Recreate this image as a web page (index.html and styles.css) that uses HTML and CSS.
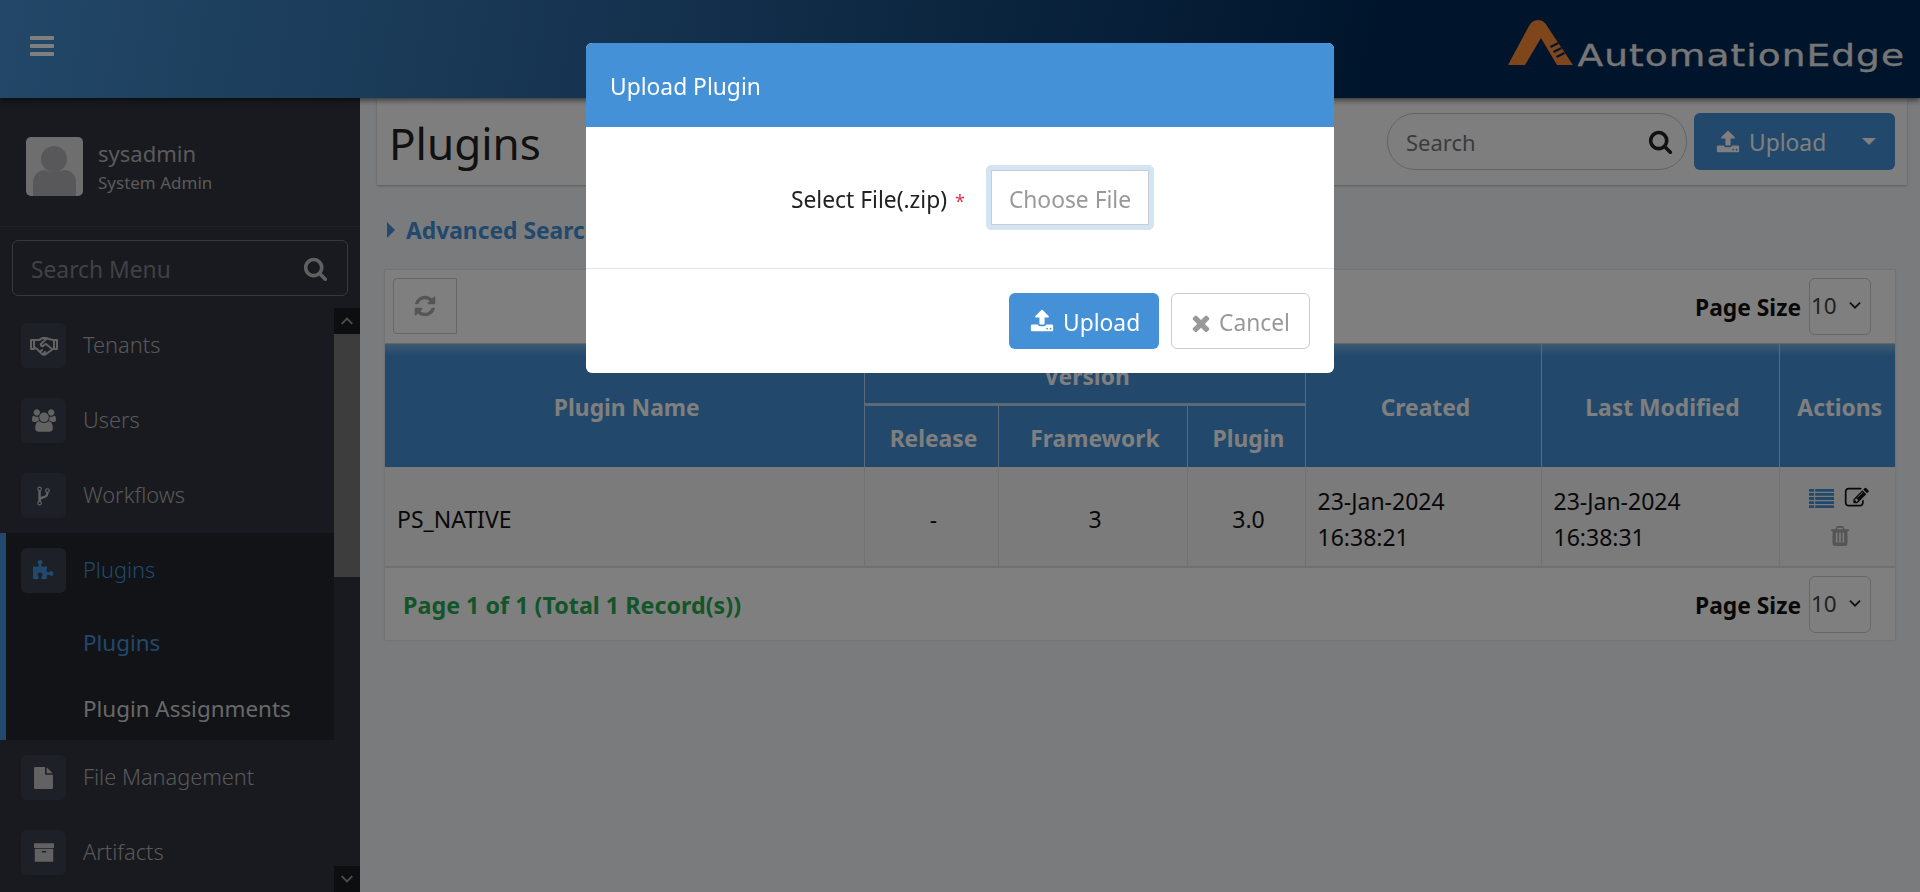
FILE: index.html
```html
<!DOCTYPE html>
<html lang="en">
  <head>
    <meta charset="UTF-8" />
    <title>Plugins</title>
    <link rel="stylesheet" href="styles.css">
  </head>
  <body>
    <svg class="sprite" xmlns="http://www.w3.org/2000/svg">
      <symbol id="i-bars" viewBox="128 256 1536 1280"><path d="M1664 1344v128q0 26-19 45t-45 19h-1408q-26 0-45-19t-19-45v-128q0-26 19-45t45-19h1408q26 0 45 19t19 45zm0-512v128q0 26-19 45t-45 19h-1408q-26 0-45-19t-19-45v-128q0-26 19-45t45-19h1408q26 0 45 19t19 45zm0-512v128q0 26-19 45t-45 19h-1408q-26 0-45-19t-19-45v-128q0-26 19-45t45-19h1408q26 0 45 19t19 45z"/></symbol>
      <symbol id="i-search" viewBox="0 0 1792 1792"><path d="M1216 832q0-185-131.5-316.5t-316.5-131.5-316.5 131.5-131.5 316.5 131.5 316.5 316.5 131.5 316.5-131.5 131.5-316.5zm512 832q0 52-38 90t-90 38q-54 0-90-38l-343-342q-179 124-399 124-143 0-273.5-55.5t-225-150-150-225-55.5-273.5 55.5-273.5 150-225 225-150 273.5-55.5 273.5 55.5 225 150 150 225 55.5 273.5q0 220-124 399l343 343q37 37 37 90z"/></symbol>
      <symbol id="i-upload" viewBox="0 0 1792 1792"><path d="M1344 1472q0-26-19-45t-45-19-45 19-19 45 19 45 45 19 45-19 19-45zm256 0q0-26-19-45t-45-19-45 19-19 45 19 45 45 19 45-19 19-45zm128-224v320q0 40-28 68t-68 28h-1472q-40 0-68-28t-28-68v-320q0-40 28-68t68-28h427q21 56 70.5 92t110.5 36h256q61 0 110.5-36t70.5-92h427q40 0 68 28t28 68zm-325-648q-17 40-59 40h-256v448q0 26-19 45t-45 19h-256q-26 0-45-19t-19-45v-448h-256q-42 0-59-40-17-39 14-69l448-448q18-19 45-19t45 19l448 448q31 30 14 69z"/></symbol>
      <symbol id="i-refresh" viewBox="0 0 1792 1792"><path d="M1639 1056q0 5-1 7-64 268-268 434.5t-478 166.5q-146 0-282.5-55t-243.5-157l-129 129q-19 19-45 19t-45-19-19-45v-448q0-26 19-45t45-19h448q26 0 45 19t19 45-19 45l-137 137q71 66 161 102t187 36q134 0 250-65t186-179q11-17 53-117 8-23 30-23h192q13 0 22.5 9.5t9.5 22.5zm25-800v448q0 26-19 45t-45 19h-448q-26 0-45-19t-19-45 19-45l138-138q-148-137-349-137-134 0-250 65t-186 179q-11 17-53 117-8 23-30 23h-199q-13 0-22.5-9.5t-9.5-22.5v-7q65-268 270-434.5t480-166.5q146 0 284 55.5t245 156.5l130-129q19-19 45-19t45 19 19 45z"/></symbol>
      <symbol id="i-times" viewBox="256 256 1280 1280"><path d="M1490 1322q0 40-28 68l-136 136q-28 28-68 28t-68-28l-294-294-294 294q-28 28-68 28t-68-28l-136-136q-28-28-28-68t28-68l294-294-294-294q-28-28-28-68t28-68l136-136q28-28 68-28t68 28l294 294 294-294q28-28 68-28t68 28l136 136q28 28 28 68t-28 68l-294 294 294 294q28 28 28 68z"/></symbol>
      <symbol id="i-users" viewBox="0 0 1920 1792"><path d="M593 896q-162 5-265 128h-134q-82 0-138-40.5t-56-118.5q0-353 124-353 6 0 43.5 21t97.5 42.5 119 21.5q67 0 133-23-5 37-5 66 0 139 81 256zm1071 637q0 120-73 189.5t-194 69.5h-874q-121 0-194-69.5t-73-189.5q0-53 3.5-103.5t14-109 26.5-108.5 43-97.5 62-81 85.5-53.5 111.5-20q10 0 43 21.5t73 48 107 48 135 21.5 135-21.5 107-48 73-48 43-21.5q61 0 111.5 20t85.5 53.5 62 81 43 97.5 26.5 108.5 14 109 3.5 103.5zm-1024-1277q0 106-75 181t-181 75-181-75-75-181 75-181 181-75 181 75 75 181zm704 384q0 159-112.5 271.5t-271.5 112.5-271.5-112.5-112.5-271.5 112.5-271.5 271.5-112.5 271.5 112.5 112.5 271.5zm576 225q0 78-56 118.5t-138 40.5h-134q-103-123-265-128 81-117 81-256 0-29-5-66 66 23 133 23 59 0 119-21.5t97.5-42.5 43.5-21q124 0 124 353zm-128-609q0 106-75 181t-181 75-181-75-75-181 75-181 181-75 181 75 75 181z"/></symbol>
      <symbol id="i-fork" viewBox="0 0 1024 1792"><path d="M288 1472q0-40-28-68t-68-28-68 28-28 68 28 68 68 28 68-28 28-68zm0-1152q0-40-28-68t-68-28-68 28-28 68 28 68 68 28 68-28 28-68zm640 128q0-40-28-68t-68-28-68 28-28 68 28 68 68 28 68-28 28-68zm96 0q0 52-26 96.5t-70 69.5q-2 287-226 414-67 38-203 81-128 40-169.5 71t-41.5 100v26q44 25 70 69.5t26 96.5q0 80-56 136t-136 56-136-56-56-136q0-52 26-96.5t70-69.5v-820q-44-25-70-69.5t-26-96.5q0-80 56-136t136-56 136 56 56 136q0 52-26 96.5t-70 69.5v497q54-26 154-57 55-17 87.5-29.5t70.5-31 59-39.5 40.5-51 28-69.5 8.5-91.5q-44-25-70-69.5t-26-96.5q0-80 56-136t136-56 136 56 56 136z"/></symbol>
      <symbol id="i-puzzle" viewBox="0 0 1792 1792"><path d="M1664 1098q0 81-44.5 135t-123.5 54q-41 0-77.5-17.5t-59-38-56.5-38-71-17.5q-110 0-110 124 0 39 16 115t15 115v5q-22 0-33 1-34 3-97.5 11.5t-115.5 13.5-98 5q-61 0-103-26.5t-42-83.5q0-37 17.5-71t38-56.5 38-59 17.5-77.5q0-79-54-123.5t-135-44.5q-84 0-143 45.5t-59 127.5q0 43 15 83t33.5 64.5 33.5 53 15 50.5q0 45-46 89-37 35-117 35-95 0-245-24-9-2-27.5-4t-27.5-4l-13-2q-2 0-4-1-2 0-2-1v-1024q2 1 17.5 3.5t34 5 21.5 3.5q150 24 245 24 80 0 117-35 46-44 46-89 0-22-15-50.5t-33.5-53-33.5-64.5-15-83q0-82 59-127.5t144-45.5q80 0 134 44.5t54 123.5q0 41-17.5 77.5t-38 59-38 56.5-17.5 71q0 57 42 83.5t103 26.5q64 0 180-15t163-17v2q-1 2-3.5 17.5t-5 34-3.5 21.5q-24 150-24 245 0 80 35 117 44 46 89 46 22 0 50.5-15t53-33.5 64.5-33.5 83-15q82 0 127.5 59t45.5 143z"/></symbol>
      <symbol id="i-file" viewBox="128 0 1536 1792"><path d="M1152 512v-472q22 14 36 28l408 408q14 14 28 36h-472zm-128 32q0 40 28 68t68 28h544v1056q0 40-28 68t-68 28h-1344q-40 0-68-28t-28-68v-1600q0-40 28-68t68-28h800v544z"/></symbol>
      <symbol id="i-archive" viewBox="64 128 1664 1536"><path d="M1088 832q0-26-19-45t-45-19h-256q-26 0-45 19t-19 45 19 45 45 19h256q26 0 45-19t19-45zm576-192v960q0 26-19 45t-45 19h-1408q-26 0-45-19t-19-45v-960q0-26 19-45t45-19h1408q26 0 45 19t19 45zm64-448v256q0 26-19 45t-45 19h-1536q-26 0-45-19t-19-45v-256q0-26 19-45t45-19h1536q26 0 45 19t19 45z"/></symbol>
      <symbol id="i-edit" viewBox="0 0 1892 1792"><path d="M888 1184l116-116-152-152-116 116v56h96v96h56zm440-720q-16-16-33 1l-350 350q-17 17-1 33t33-1l350-350q17-17 1-33zm80 594v190q0 119-84.5 203.5t-203.5 84.5h-832q-119 0-203.5-84.5t-84.5-203.5v-832q0-119 84.5-203.5t203.5-84.5h832q63 0 117 25 15 7 18 23 3 17-9 29l-49 49q-14 14-32 8-23-6-45-6h-832q-66 0-113 47t-47 113v832q0 66 47 113t113 47h832q66 0 113-47t47-113v-126q0-13 9-22l64-64q15-15 35-7t20 29zm-96-738l288 288-672 672h-288v-288zm444 132l-92 92-288-288 92-92q28-28 68-28t68 28l152 152q28 28 28 68t-28 68z"/></symbol>
      <symbol id="i-trash" viewBox="128 128 1536 1536"><path d="M704 1376v-704q0-14-9-23t-23-9h-64q-14 0-23 9t-9 23v704q0 14 9 23t23 9h64q14 0 23-9t9-23zm256 0v-704q0-14-9-23t-23-9h-64q-14 0-23 9t-9 23v704q0 14 9 23t23 9h64q14 0 23-9t9-23zm256 0v-704q0-14-9-23t-23-9h-64q-14 0-23 9t-9 23v704q0 14 9 23t23 9h64q14 0 23-9t9-23zm-544-992h448l-48-117q-7-9-17-11h-317q-10 2-17 11zm928 32v64q0 14-9 23t-23 9h-96v948q0 83-47 143.5t-113 60.5h-832q-66 0-113-58.5t-47-141.5v-952h-96q-14 0-23-9t-9-23v-64q0-14 9-23t23-9h309l70-167q15-37 54-63t79-26h320q40 0 79 26t54 63l70 167h309q14 0 23 9t9 23z"/></symbol>
      <symbol id="i-list" viewBox="0 0 24 22" preserveAspectRatio="none"><path d="M0 0h5v3.200H0zM6 0h18v3.200H6zM0 4.700h5v3.200H0zM6 4.700h18v3.200H6zM0 9.400h5v3.200H0zM6 9.400h18v3.200H6zM0 14.100h5v3.200H0zM6 14.100h18v3.200H6zM0 18.800h5V22H0zM6 18.800h18V22H6z"/></symbol>
      <symbol id="i-hand" viewBox="0 0 28 20"><path fill="none" stroke="currentColor" stroke-width="2" stroke-linejoin="round" stroke-linecap="round" d="M5 4h4l4-2h3l3 1 4 1h3M1 4h3v9H1zM24 4h3v9h-3zM5 12l2 1 5 5c1 1 3 1 4 0l7-5M16 3l-5 5c-1 2 2 3 3 1l2-1 6 5M10 16l2-2M13 18l2-2"/></symbol>
      <symbol id="i-chev" viewBox="0 0 12 8"><path fill="none" stroke="currentColor" stroke-width="1.600" d="M1.500 1.500 6 6l4.500-4.500"/></symbol>
      <symbol id="i-logo" viewBox="0 0 65 45"><path d="M0 45 21 6C23 2 26 0 30 0s7 2 9 6l26 39H49L33 18 17 45z"/><path fill="#002a58" d="m42 26 8-4 1 2-8 4zm3 5 8-4 1 2-8 4zm3 5 8-4 1 2-8 4z"/></symbol>
    </svg>

    <div class="app">
      <header class="topbar">
        <svg class="ic menu-toggle"><use href="#i-bars" /></svg>
        <div class="logo">
          <svg class="logo-mark"><use href="#i-logo" /></svg>
          <span class="logo-text">AutomationEdge</span>
        </div>
      </header>

      <div class="main">
        <aside class="sidebar">
          <div class="profile">
            <svg class="avatar" viewBox="0 0 57 59">
              <rect width="57" height="59" rx="5" fill="#dcdcdc" />
              <circle cx="28" cy="22" r="13" fill="#b0b0b4" />
              <path d="M7 59V45c0-7 6-12 12-12 3 2 15 2 19 0 7 0 12 5 12 12v14z" fill="#b0b0b4" />
            </svg>
            <div class="profile-text">
              <div class="profile-name">sysadmin</div>
              <div class="profile-role">System Admin</div>
            </div>
          </div>

          <div class="menu-search">
            <span>Search Menu</span>
            <svg class="ic"><use href="#i-search" /></svg>
          </div>

          <div class="menu-wrap">
            <nav class="menu">
              <a class="menu-item"><span class="tile"><svg class="ic ic-hand"><use href="#i-hand" /></svg></span><span class="label">Tenants</span></a>
              <a class="menu-item"><span class="tile"><svg class="ic ic-users"><use href="#i-users" /></svg></span><span class="label">Users</span></a>
              <a class="menu-item"><span class="tile"><svg class="ic ic-fork"><use href="#i-fork" /></svg></span><span class="label">Workflows</span></a>
              <div class="menu-group">
                <a class="menu-item active"><span class="tile"><svg class="ic ic-puzzle"><use href="#i-puzzle" /></svg></span><span class="label">Plugins</span></a>
                <a class="sub-item active">Plugins</a>
                <a class="sub-item">Plugin Assignments</a>
              </div>
              <a class="menu-item"><span class="tile"><svg class="ic ic-file"><use href="#i-file" /></svg></span><span class="label">File Management</span></a>
              <a class="menu-item"><span class="tile"><svg class="ic ic-archive"><use href="#i-archive" /></svg></span><span class="label">Artifacts</span></a>
            </nav>
            <div class="scrollbar">
              <div class="scroll-btn"><svg class="ic up"><use href="#i-chev" /></svg></div>
              <div class="scroll-thumb"></div>
              <div class="scroll-rest"></div>
              <div class="scroll-btn"><svg class="ic"><use href="#i-chev" /></svg></div>
            </div>
          </div>
        </aside>

        <main class="content">
          <div class="title-bar">
            <h1>Plugins</h1>
            <div class="title-tools">
              <div class="search-pill">
                <span>Search</span>
                <svg class="ic"><use href="#i-search" /></svg>
              </div>
              <div class="split-btn">
                <svg class="ic"><use href="#i-upload" /></svg>
                <span>Upload</span>
                <i class="caret"></i>
              </div>
            </div>
          </div>

          <div class="advanced"><i class="caret-right"></i>Advanced Search</div>

          <section class="panel">
            <div class="toolbar">
              <div class="refresh-btn"><svg class="ic"><use href="#i-refresh" /></svg></div>
              <div class="page-size">
                <b>Page Size</b>
                <div class="size-select"><span>10</span><svg class="ic"><use href="#i-chev" /></svg></div>
              </div>
            </div>

            <table class="grid">
              <colgroup>
                <col class="c-name" /><col class="c-release" /><col class="c-framework" /><col class="c-plugin" /><col class="c-date" /><col class="c-modified" /><col />
              </colgroup>
              <thead>
                <tr>
                  <th rowspan="2">Plugin Name</th>
                  <th colspan="3" class="th-version">Version</th>
                  <th rowspan="2">Created</th>
                  <th rowspan="2">Last Modified</th>
                  <th rowspan="2">Actions</th>
                </tr>
                <tr class="sub-head">
                  <th>Release</th>
                  <th>Framework</th>
                  <th>Plugin</th>
                </tr>
              </thead>
              <tbody>
                <tr>
                  <td>PS_NATIVE</td>
                  <td class="mid">-</td>
                  <td class="mid">3</td>
                  <td class="mid">3.0</td>
                  <td>23-Jan-2024<br />16:38:21</td>
                  <td>23-Jan-2024<br />16:38:31</td>
                  <td class="mid">
                    <div class="actions">
                      <svg class="ic ic-list"><use href="#i-list" /></svg>
                      <svg class="ic ic-edit"><use href="#i-edit" /></svg>
                      <svg class="ic ic-trash"><use href="#i-trash" /></svg>
                    </div>
                  </td>
                </tr>
              </tbody>
            </table>

            <div class="panel-foot">
              <b class="records">Page 1 of 1 (Total 1 Record(s))</b>
              <div class="page-size">
                <b>Page Size</b>
                <div class="size-select"><span>10</span><svg class="ic"><use href="#i-chev" /></svg></div>
              </div>
            </div>
          </section>
        </main>
      </div>
    </div>

    <div class="backdrop"></div>

    <div class="modal">
      <div class="modal-head">Upload Plugin</div>
      <div class="modal-body">
        <label>Select File(.zip) <em>*</em></label>
        <span class="file-input">Choose File</span>
      </div>
      <div class="modal-foot">
        <button class="btn btn-primary"><svg class="ic"><use href="#i-upload" /></svg>Upload</button>
        <button class="btn btn-default"><svg class="ic ic-times"><use href="#i-times" /></svg>Cancel</button>
      </div>
    </div>
  </body>
</html>
```

FILE: styles.css
```css
* {
  box-sizing: border-box;
}

html,
body {
  height: 100%;
}

body {
  margin: 0;
  font-family: "Noto Sans", "Open Sans", sans-serif;
  font-size: 22.8px;
  color: #222;
  background-color: #f4f6fa;
  overflow: hidden;
}

.sprite {
  display: none;
}

.ic {
  display: block;
  fill: currentColor;
  flex: none;
}

.app {
  height: 100vh;
  display: flex;
  flex-direction: column;
}

/* top bar */
.topbar {
  height: 98px;
  flex: none;
  display: flex;
  align-items: flex-start;
  justify-content: space-between;
  background: linear-gradient(100deg, #458fd0 0%, #2f6ca6 28%, #002a58 72%, #002a58 100%);
  box-shadow: 0 2px 6px rgba(0, 0, 0, 0.6);
  position: relative;
  z-index: 2;
}

.menu-toggle {
  width: 24px;
  height: 20px;
  margin: 36px 0 0 30px;
  color: #fff;
}

.logo {
  display: flex;
  align-items: flex-end;
  margin: 20px 15px 0 0;
}

.logo-mark {
  width: 65px;
  height: 45px;
  fill: #ff8c38;
  margin-right: 70px;
}

.logo-text {
  font-family: "DejaVu Sans", sans-serif;
  font-size: 30px;
  line-height: 32px;
  letter-spacing: 0.85px;
  color: #ececec;
  margin-bottom: -7px;
  transform: scaleX(1.25);
  transform-origin: right center;
  -webkit-text-stroke: 0.3px #ececec;
}

.main {
  flex: 1;
  display: flex;
  min-height: 0;
}

/* sidebar */
.sidebar {
  width: 360px;
  flex: none;
  display: flex;
  flex-direction: column;
  background-color: #30343e;
  color: #b4b4b4;
  overflow: hidden;
}

.profile {
  height: 129px;
  flex: none;
  display: flex;
  align-items: center;
  gap: 15px;
  padding: 0 26px;
  border-bottom: 1px solid #3e424c;
}

.avatar {
  width: 57px;
  height: 59px;
  flex: none;
  margin-top: 8px;
}

.profile-text {
  padding-top: 12px;
}

.profile-name {
  font-size: 22px;
  line-height: 30px;
}

.profile-role {
  font-size: 17px;
  line-height: 30px;
}

.menu-search {
  height: 56px;
  flex: none;
  margin: 13px 12px 12px;
  padding: 0 19px 0 18px;
  display: flex;
  align-items: center;
  justify-content: space-between;
  border: 1px solid #6c6f76;
  border-radius: 6px;
  color: #80838a;
}

.menu-search span {
  padding-top: 2px;
}

.menu-search .ic {
  width: 25px;
  height: 25px;
  color: #c0c0c0;
}

.menu-wrap {
  flex: 1;
  display: flex;
  min-height: 0;
}

.menu {
  flex: 1;
  min-width: 0;
}

.menu-item {
  height: 75px;
  display: flex;
  align-items: center;
  gap: 17px;
  padding-left: 21px;
  color: #b0b0b0;
}

.label {
  font-size: 21.8px;
  font-weight: 300;
  margin-top: -2px;
}

.tile {
  width: 45px;
  height: 45px;
  flex: none;
  display: flex;
  align-items: center;
  justify-content: center;
  border-radius: 6px;
  background-color: #3a404c;
  color: #c4c4c4;
}

.ic-hand {
  width: 28px;
  height: 20px;
}

.ic-users {
  width: 24px;
  height: 23px;
}

.ic-fork {
  width: 13px;
  height: 22px;
}

.ic-puzzle {
  width: 22px;
  height: 22px;
}

.ic-file {
  width: 19px;
  height: 22px;
}

.ic-archive {
  width: 20px;
  height: 19px;
}

.menu-group {
  height: 207px;
  background-color: #22262c;
  box-shadow: inset 6px 0 0 #4491d7;
}

.menu-item.active,
.sub-item.active {
  color: #4491d7;
}

.menu-item.active .tile {
  color: #4491d7;
}

.sub-item {
  display: flex;
  align-items: center;
  height: 66px;
  padding: 2px 0 0 83px;
  font-size: 22.4px;
  color: #d0d0d0;
}

.scrollbar {
  width: 26px;
  flex: none;
  display: flex;
  flex-direction: column;
}

.scroll-btn {
  height: 26px;
  flex: none;
  display: flex;
  align-items: center;
  justify-content: center;
  background-color: #1a1c20;
  color: #9a9a9a;
}

.scroll-btn .ic {
  width: 14px;
  height: 10px;
}

.scroll-btn .up {
  transform: rotate(180deg);
}

.scroll-thumb {
  height: 243px;
  flex: none;
  background-color: #7a7a7a;
}

.scroll-rest {
  flex: 1;
}

/* content */
.content {
  flex: 1;
  min-width: 0;
}

.title-bar {
  height: 87px;
  margin: 0 13px 0 17px;
  padding: 15px 12px 0 12px;
  display: flex;
  justify-content: space-between;
  align-items: flex-start;
  background-color: #fdfdfe;
  box-shadow: 0 1px 2px rgba(0, 0, 0, 0.25);
}

h1 {
  margin: 0;
  padding-top: 2px;
  font-size: 44px;
  font-weight: 400;
  line-height: 56px;
  color: #222;
}

.title-tools {
  display: flex;
  gap: 7px;
}

.search-pill {
  width: 300px;
  height: 57px;
  padding: 0 13px 0 18px;
  display: flex;
  align-items: center;
  justify-content: space-between;
  border: 1px solid #c4c6ca;
  border-radius: 28px;
  font-size: 22px;
  color: #777;
}

.search-pill .ic {
  width: 25px;
  height: 25px;
  color: #222;
}

.split-btn {
  width: 201px;
  height: 57px;
  padding: 0 19px 0 22px;
  display: flex;
  align-items: center;
  gap: 9px;
  border-radius: 6px;
  background-color: #4491d7;
  color: #fff;
}

.split-btn span {
  padding-top: 2px;
}

.split-btn .ic {
  width: 24px;
  height: 24px;
}

.caret {
  width: 0;
  height: 0;
  margin-left: auto;
  border: 7px solid transparent;
  border-top-color: #fff;
  border-bottom: 0;
}

.advanced {
  height: 85px;
  margin-left: 27px;
  padding-top: 5px;
  display: flex;
  align-items: center;
  font-weight: 700;
  color: #4491d7;
}

.caret-right {
  width: 0;
  height: 0;
  margin-right: 11px;
  border: 8px solid transparent;
  border-left: 8px solid #4491d7;
  border-right: 0;
}

.panel {
  margin: 0 25px;
  background-color: #fff;
  box-shadow: 0 0 2px rgba(0, 0, 0, 0.2);
}

.toolbar {
  height: 74px;
  padding: 8px 24px 0 8px;
  display: flex;
  justify-content: space-between;
  align-items: flex-start;
  border-bottom: 1px solid #ccc;
}

.refresh-btn {
  width: 64px;
  height: 56px;
  display: flex;
  align-items: center;
  justify-content: center;
  border: 1px solid #ccc;
  border-radius: 4px 0 0 4px;
  color: #aaa;
}

.refresh-btn .ic {
  width: 24px;
  height: 24px;
}

.page-size {
  display: flex;
  align-items: center;
  gap: 8px;
  color: #111;
}

.page-size b {
  padding-top: 2px;
}

.size-select {
  width: 62px;
  height: 57px;
  padding: 0 8px 2px 1px;
  display: flex;
  align-items: center;
  justify-content: space-between;
  border: 1px solid #ccc;
  border-radius: 6px;
  font-size: 22.5px;
  color: #444;
}

.size-select .ic {
  width: 14px;
  height: 9px;
  color: #222;
}

.grid {
  width: 100%;
  border-collapse: collapse;
  table-layout: fixed;
}

.c-name {
  width: 479px;
}

.c-release {
  width: 134px;
}

.c-framework {
  width: 189px;
}

.c-plugin {
  width: 118px;
}

.c-date {
  width: 236px;
}

.c-modified {
  width: 238px;
}

.grid th {
  padding: 4px 0 0 5px;
  font-weight: 700;
  color: #fff;
  background-color: #4491d7;
  border-left: 1px solid #b8d4ee;
}

.grid th:first-child {
  border-left: 0;
}

.grid thead tr:first-child th {
  height: 60px;
  background-image: linear-gradient(rgba(255, 255, 255, 0.3), transparent 12px);
}

.grid .th-version {
  padding-top: 0;
  vertical-align: bottom;
  line-height: 52px;
  border-bottom: 3px solid #b8d4ee;
}

.grid .sub-head th {
  height: 63px;
}

.grid .sub-head th:first-child {
  border-left: 1px solid #b8d4ee;
}

.grid td {
  height: 100px;
  padding: 4px 12px 0;
  font-size: 23px;
  line-height: 36px;
  color: #111;
  background-color: #f7f7f7;
  border-left: 1px solid #e4e4e4;
  border-bottom: 2px solid #e0e0e0;
}

.grid td:first-child {
  border-left: 0;
}

.grid .mid {
  padding-left: 17px;
  text-align: center;
}

.grid td:last-child {
  padding: 0 0 0 5px;
}

.actions {
  width: 62px;
  margin: 0 auto;
  display: flex;
  flex-wrap: wrap;
  justify-content: center;
  align-items: center;
  gap: 15px 10px;
}

.ic-list {
  width: 25px;
  height: 19px;
  color: #4491d7;
}

.ic-edit {
  width: 27px;
  height: 24px;
  color: #111;
}

.ic-trash {
  width: 20px;
  height: 22px;
  color: #aaa;
}

.panel-foot {
  height: 72px;
  padding: 8px 24px 0 18px;
  display: flex;
  justify-content: space-between;
  align-items: flex-start;
}

.records {
  font-size: 23.3px;
  line-height: 59px;
  color: #26ab50;
}

/* dialog */
.backdrop {
  position: fixed;
  inset: 0;
  z-index: 5;
  background-color: rgba(0, 0, 0, 0.5);
}

.modal {
  position: fixed;
  z-index: 6;
  top: 43px;
  left: 586px;
  width: 748px;
  height: 330px;
  border-radius: 6px;
  background-color: #fff;
  overflow: hidden;
}

.modal-head {
  height: 84px;
  padding: 2px 0 0 24px;
  display: flex;
  align-items: center;
  color: #fff;
  background-color: #4491d7;
}

.modal-body {
  height: 142px;
  display: flex;
  align-items: flex-start;
  padding: 38px 0 0 205px;
  border-bottom: 1px solid #e4e5e8;
}

.modal-body label {
  width: 195px;
  line-height: 69px;
}

.modal-body em {
  display: inline-block;
  margin-left: 2px;
  font-size: 18px;
  font-style: normal;
  color: #e0324a;
}

.file-input {
  width: 168px;
  height: 65px;
  padding-top: 3px;
  display: flex;
  align-items: center;
  justify-content: center;
  border-radius: 6px;
  box-shadow: inset 0 0 0 5px #d3e4f5, inset 0 0 0 6px #ccc;
  color: #999;
}

.modal-foot {
  height: 104px;
  padding: 24px 24px 0 0;
  display: flex;
  justify-content: flex-end;
  align-items: flex-start;
  gap: 12px;
}

.btn {
  height: 56px;
  padding: 3px 18px 0 20px;
  display: flex;
  align-items: center;
  gap: 9px;
  font: inherit;
  border-radius: 6px;
  border: 1px solid transparent;
}

.btn .ic {
  width: 24px;
  height: 24px;
  margin-top: -3px;
}

.btn .ic-times {
  width: 18px;
  height: 18px;
  margin-top: 0;
}

.btn-primary {
  width: 150px;
  background-color: #4491d7;
  color: #fff;
}

.btn-default {
  width: 139px;
  background-color: #fff;
  border-color: #ccc;
  color: #999;
}
```
